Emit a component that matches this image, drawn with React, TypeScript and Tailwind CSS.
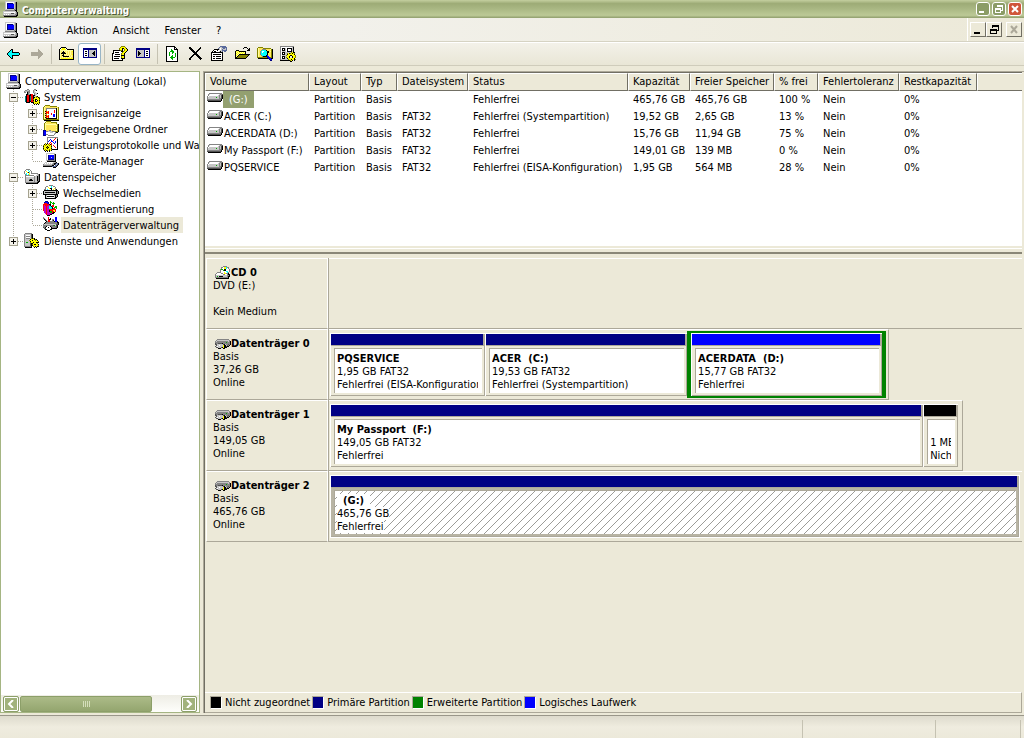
import React from "react";

const palette: Record<string, string> = {
  k: "#000000",
  w: "#ffffff",
  g: "#848484",
  l: "#c6c6c6",
  d: "#525252",
  b: "#0000ff",
  n: "#000084",
  y: "#ffff00",
  o: "#ffff9c",
  s: "#ffe75a",
  m: "#848400",
  c: "#00ffff",
  t: "#008484",
  r: "#ff0000",
  e: "#00b000",
  p: "#c000c0",
  h: "#5a6b9c",
  a: "#aca899",
};

const icons: Record<string, string[]> = {
  computer: [
    "...lllllllllll..",
    "...lwwwwwwwwlgk.",
    "...lwnnnnnnllgk.",
    "...lwnbbbbbblgk.",
    "...lwnbbbbbblgk.",
    "...lwnbbbbbblgk.",
    "...lwnbbbbbblgk.",
    "...lwnnnnnnnlgk.",
    "...lllllllllggk.",
    "...ggggggggggkk.",
    ".lllllllllllllk.",
    ".lwwwwwwwwwwwlgk",
    ".lllllllldddllgk",
    ".lwlwlwllllllggk",
    ".gggggggggggggkk",
    "..kkkkkkkkkkkkk.",
  ],
  back: [
    "................",
    "................",
    "................",
    ".....kk.........",
    "....kck.........",
    "...kcck.........",
    "..kccckkkkkkk...",
    ".kccccccccccck..",
    ".kccccccccccck..",
    "..kccckkkkkkk...",
    "...kcck.........",
    "....kck.........",
    ".....kk.........",
    "................",
    "................",
    "................",
  ],
  forward: [
    "................",
    "................",
    "................",
    ".........a......",
    ".........aa.....",
    ".........aaa....",
    "..aaaaaaaaaaa...",
    "..aaaaaaaaaaaa..",
    "..aaaaaaaaaaaa..",
    "..aaaaaaaaaaa...",
    ".........aaa....",
    ".........aa.....",
    ".........a......",
    "................",
    "................",
    "................",
  ],
  up: [
    "................",
    "..kkkkk.........",
    ".kwyyywk........",
    "kwyyyyywkkkkkkk.",
    "koooooooooooook.",
    "kosokososososyk.",
    "koskkksososossk.",
    "kokkkkkososossk.",
    "kosokososososyk.",
    "koskksososososk.",
    "kosokkkkkkososk.",
    "kosososososossk.",
    "koyyyyyyyyyyyyk.",
    "kkkkkkkkkkkkkkk.",
    "................",
    "................",
  ],
  tree: [
    "................",
    "................",
    ".nnnnnnnnnnnnnn.",
    ".nnnnnnnnnnnnnn.",
    ".nwwwwnllllllln.",
    ".nwkkwnlllllkln.",
    ".nwwwwnllllkkln.",
    ".nwkkwnlllkkkln.",
    ".nwwwwnllllkkln.",
    ".nwkkwnlllllkln.",
    ".nwwwwnllllllln.",
    ".nnnnnnnnnnnnnn.",
    "................",
    "................",
    "................",
    "................",
  ],
  pane: [
    "................",
    "................",
    ".nnnnnnnnnnnnnn.",
    ".nnnnnnnnnnnnnn.",
    ".nlllllllnwwwwn.",
    ".nlklllllnwkkwn.",
    ".nlkkllllnwwwwn.",
    ".nlkkklllnwkkwn.",
    ".nlkkllllnwwwwn.",
    ".nlklllllnwkkwn.",
    ".nlllllllnwwwwn.",
    ".nnnnnnnnnnnnnn.",
    "................",
    "................",
    "................",
    "................",
  ],
  help: [
    ".........mmmm...",
    "........myyyym..",
    ".......myykkyyk.",
    ".......myyk.myyk",
    ".kkkkkkkmmk.myyk",
    ".kwwwwwwwkkmyyk.",
    ".kwkkkkwwwmyyk..",
    "kkwwwwwwwmyyk...",
    "kwwkkkkkwmyyk...",
    "kwwwwwwwwkkkk...",
    "kwkkkkkkwmyyk...",
    "kwwwwwwwwmyyk...",
    "kwkkkkkwwkkkk...",
    "kwwwwwwwwwk.....",
    "kkkkkkkkkkk.....",
    "................",
  ],
  refresh: [
    ".kkkkkkkkk......",
    ".kwwwwwwwkk.....",
    ".kwwwwwwwkwk....",
    ".kwwwwewwkkkk...",
    ".kwwwweewwwwk...",
    ".kwwweeeewwwk...",
    ".kwwewweewwwk...",
    ".kwwewwewwewk...",
    ".kwwewwwwwewk...",
    ".kwwewwewwewk...",
    ".kwwwweewwewk...",
    ".kwwweeeeewwk...",
    ".kwwwweewwwwk...",
    ".kwwwwwewwwwk...",
    ".kwwwwwwwwwwk...",
    ".kkkkkkkkkkkk...",
  ],
  remove: [
    "................",
    ".kk.........k...",
    ".kkk.......kk...",
    "..kkk.....kk....",
    "...kkk...kk.....",
    "....kkk.kk......",
    ".....kkkk.......",
    "......kkk.......",
    ".....kkkkk......",
    "....kk..kkk.....",
    "...kk....kkk....",
    "..kk......kkk...",
    ".kk........kkk..",
    ".kk.........k...",
    "................",
    "................",
  ],
  properties: [
    ".........hhhhhh.",
    "........hllhhhhh",
    ".......hlwllhhlh",
    "...kkkkklwlhlllh",
    "..kwwwkwwllhhhhh",
    ".kwkkwwwlklh.hh.",
    "kkkkkkkkkkkk....",
    "kwwwwwwwwwwk....",
    "kwkkkkkkkkwk....",
    "kwwwwwwwwwwk....",
    "kwkkwkkkkkwk....",
    "kwwwwwwwwwwk....",
    "kwkkwkkkkkwk....",
    "kwwwwwwwwwwk....",
    "kkkkkkkkkkkk....",
    "................",
  ],
  open: [
    "................",
    "..........kkk...",
    ".........k...k.k",
    "..............kk",
    "..kkk........kkk",
    ".kyoykkkkkkk....",
    ".koyoyoyoyok....",
    ".kyoyoyoyoyk....",
    ".koyokkkkkkkkkkk",
    ".kyokmmmmmmmmmk.",
    ".kokmmmmmmmmmk..",
    ".kkmmmmmmmmmk...",
    ".kkkkkkkkkkk....",
    "................",
    "................",
    "................",
  ],
  search: [
    "................",
    ".mmmmm..........",
    "mossssmmmmmmmm..",
    "mosssggggssssomk",
    "mossgcccckssssmk",
    "mosgcwwccckksomk",
    "mosgcwcccckkssmk",
    "mosgccccccksssmk",
    "mosgccccccksssmk",
    "mossgcccckbsssmk",
    "mosssgkkkkbbssmk",
    "mmmmmmmmmmnbbmmk",
    ".kkkkkkkkkknbbkk",
    "............nbb.",
    ".............nn.",
    "................",
  ],
  settings: [
    "gggggggggggggg..",
    "gwwwwwwwwwwwlk..",
    "gwkkklwkkkkklk..",
    "gwkwklwkwwwklk..",
    "gwkkklwkwwwklk..",
    "gwllllwkkkkklk..",
    "gwkkkllllllmykk.",
    "gwkwkllmykmykym.",
    "gwkkkllkyyyyyyk.",
    "gwllllmyyykkyyym",
    "gwkkkllyyk..kyym",
    "gwkwklmyyk..kyym",
    "gwkkkllkyyyyyyk.",
    "glllllllmyykyykm",
    "kkkkkkkkkkmyk.k.",
    "..........kk....",
  ],
  tools: [
    "...gg.....gg....",
    ".ggllg...gllk...",
    "gllggg...gl.....",
    "gg.kgg...gll....",
    "...kgl....gllk..",
    "..kkggkrr.gll...",
    "..krrkkrrkkl....",
    ".tkrrktrrkllmk..",
    ".tkrrktrrkkymykm",
    ".tkrrktrrkyyyyyk",
    ".tkrrktrrmykkyym",
    ".tkrrktrrkyk.kyk",
    ".tkrrkkrrmykkyym",
    "..kkkk.kkkyyyyyk",
    ".........kymykym",
    "..........k.k.k.",
  ],
  events: [
    "..mmmmm.........",
    ".mossssmmmmmmm..",
    "mosssssssssssssm",
    "mosggggggggggkom",
    "mosgwwwwwwwwwkom",
    "mosgwwwwwwwrwkom",
    "mokryrwwwwwrwkom",
    "mosrrrwwwwwrwkom",
    "mokryrwwrwwwwkom",
    "mosgwwwwrwbbwkom",
    "mokryrwwwwbbwkom",
    "mosrrrwwwwbbwkom",
    "mokryrwwwwwwwkom",
    "moskkkkkkkkkkkom",
    "mmmmmmmmmmmmmmmm",
    ".kkkkkkkkkkkkkkk",
  ],
  shared: [
    "...mmmmm........",
    "..mossssmmmmmm..",
    ".mossssssssssm..",
    ".mooooooooooosmk",
    ".mossssssssssomk",
    ".mosssssssssssmk",
    ".mossssssssssomk",
    ".mosssssssssssmk",
    ".mossssssssssomk",
    "nnnsssggsssssomk",
    "nbbggllllgggmmmk",
    "nbbwwwwlllwwgkk.",
    "nbbwwwwwwwwlg...",
    "nbbggwwwwwwg....",
    "nnn..gggggg.....",
    "................",
  ],
  perf: [
    "....ggggggggggg.",
    "....gwwwwwwwrwg.",
    "....gwwbwwwrwwk.",
    "....gwbwbwrwwwk.",
    "....gbwwbbwwbwk.",
    "....gwwrwwbwbwk.",
    "..m.kwrwrwwbwwk.",
    ".kykymykrwwwwwk.",
    "mymyyymymwrwwwk.",
    "kyyykyyykwwrwwk.",
    "myykmkyymwwwrwk.",
    "kyyykyyykwwwwwk.",
    "mymyyymymkkkkkk.",
    ".kykmykyk.......",
    "..k.k.k.........",
    "................",
  ],
  device: [
    "...lllllllll....",
    "...lwwwwwwwgk...",
    "...lwnbbbbbgk...",
    "...lwnbbbbbgk...",
    "...lwnbblbbgk...",
    "...lwnbbbbbgk...",
    "...lwnnnnnngk...",
    "...lggggggggk...",
    "....kkkkkkkkk...",
    "..llwwwwwwllgk..",
    ".lwlwlwlwlgkkhhk",
    "gllllllllggkhlhk",
    "gggggggggkk.hhk.",
    "kkkkkkkkkhhhhk..",
    "..........kkk...",
    "................",
  ],
  storage: [
    "..gggg..........",
    ".gwwcwg.........",
    "gwywwcwg........",
    "gwwyklwg........",
    "gwcwwywggggggg..",
    ".gcwcywwwwwwwlgk",
    ".gggggggggwwllgk",
    ".gwwwwwwwwgllkgk",
    ".gllllllllgllkgk",
    ".gllllllllgllkgk",
    ".glllgkkllgllkgk",
    ".glllkkkklgllkgk",
    ".gllllllllgllgkk",
    ".ggggggggggggkk.",
    "..kkkkkkkkkkkk..",
    "................",
  ],
  removable: [
    "......gggg......",
    "...ggwwwcwgg....",
    "..gwwywwcwwwg...",
    "..gwwwykkwwyg...",
    ".ggwcwwwkwywgk..",
    ".kkkkkkkkkkkkkk.",
    "kllllllllllllkgk",
    "klkkkkkkkkkklkgk",
    "kllllllllllllkgk",
    "kkkkkkkkkkkkkkk.",
    "..klwwwwwwwlkgk.",
    "..klkkkkkkklkgk.",
    "..klwwwwwwwlkk..",
    "..kkkkkkkkkkk...",
    "................",
    "................",
  ],
  defrag: [
    "..nnn..e........",
    ".nbbbn.ee.e.....",
    ".rrrbn.e.eee....",
    "rrrrrrkk..e.....",
    "rprrrppk.rr.....",
    "rpprppcckrr.ee..",
    "rpprppccck.eee..",
    "rpprppccckrr.e..",
    "rpprpprrrrrrr...",
    "rpprppkrrryyr...",
    ".pprppkeerryr...",
    ".pprpppeerkk....",
    "..prpppppkk.....",
    "...rpppkk.......",
    "....kkk.........",
    "................",
  ],
  disks: [
    "g....r......bb..",
    "gg...r.k....bb..",
    ".kg..rkk.gg.bb..",
    "..kg.rr..gk.bb..",
    "...kgrrggggkbbk.",
    "..kgggggggggggkk",
    ".kggggggggggggdk",
    "gllllllllllllddk",
    "ggggggggggdeldk.",
    "gggkwwwkgggggdk.",
    "dgkwwkwwkggggdk.",
    ".ddwwwwwkkkkkk..",
    "..kkwwwkk.......",
    "....kkk.........",
    "................",
    "................",
  ],
  services: [
    ".ggggggg........",
    "glllllldk.......",
    "glwwwwldk.......",
    "glggggldk.......",
    "glwwwwldk.......",
    "glgggglmkmk.....",
    "glllllkyyykmk...",
    "gllllmyykyymyk..",
    "glllllkyyyyyyym.",
    "gleellmyykyykkk.",
    "gllllldkkyyyym..",
    "gllllldkmykkyyk.",
    "gllllldkkyyyyym.",
    "gggggggk.mykykk.",
    ".kkkkkkk..k.k...",
    "................",
  ],
  volume: [
    "................",
    "................",
    "..ggggggggggggg.",
    ".glwwwwwwwwwlggd",
    ".gwwwwwwwwwlgldk",
    "gwllllllllllgldk",
    "gllllllllellgldk",
    "glllllllllllggdk",
    "ggggggggggggggk.",
    "ddddddddddddddk.",
    ".kkkkkkkkkkkkk..",
  ],
  disk: [
    "..gggggggggggg..",
    ".gllllllllllllg.",
    "glggggggggggglgk",
    "gggggggggggegggk",
    "dggddddkgggggggk",
    "ddlllllldklggdgk",
    ".dllwlllykkldgk.",
    "dlwlllllykkdkk..",
    ".ddllldkykkk....",
    "...kkk..kk......",
  ],
  cd: [
    "........gggg....",
    "......ggwyycgg..",
    "......gwwyycwg..",
    ".....geewkkwwwg.",
    ".....gwwekkwwwg.",
    ".....gwwwwwccwg.",
    "..ggggwwwywwcg..",
    ".gwwwwggwyyggk..",
    "gwwwwwwwggwwgkk.",
    "glllllllllllggk.",
    "glelkkkkllllgkk.",
    "gggggggggggggk..",
    ".kkkkkkkkkkkkk..",
  ],
};

function Icon({ name, className = "" }: { name: string; className?: string }) {
  const rows = icons[name];
  const cells: React.ReactNode[] = [];
  rows.forEach((row, y) => {
    let x = 0;
    while (x < row.length) {
      let end = x + 1;
      while (row[end] === row[x]) end++;
      if (row[x] !== ".") {
        cells.push(<rect key={`${x}-${y}`} x={x} y={y} width={end - x} height={1} fill={palette[row[x]]} />);
      }
      x = end;
    }
  });
  return (
    <svg className={`shrink-0 ${className}`} width={16} height={rows.length} viewBox={`0 0 16 ${rows.length}`} shapeRendering="crispEdges" aria-hidden="true">
      {cells}
    </svg>
  );
}

// One 19px wide step of the dotted tree lines
function Guide({ up, down, right }: { up?: boolean; down?: boolean; right?: boolean }) {
  return (
    <svg className="shrink-0" width="19" height="16" viewBox="0 0 19 16" shapeRendering="crispEdges" aria-hidden="true">
      <g stroke="#aca899" strokeDasharray="1 1">
        {up && <path d="M8.5 0V8" />}
        {down && <path d="M8.5 8V16" />}
        {right && <path d="M9 8.5H19" />}
      </g>
    </svg>
  );
}

function Expander({ open, label, down = true }: { open?: boolean; label: string; down?: boolean }) {
  return (
    <button type="button" aria-label={label} aria-expanded={!!open} className="block shrink-0">
      <svg width="19" height="16" viewBox="0 0 19 16" shapeRendering="crispEdges">
        <g stroke="#aca899" strokeDasharray="1 1">
          <path d="M8.5 0V4" />
          {down && <path d="M8.5 12V16" />}
          <path d="M13 8.5H19" />
        </g>
        <rect x="4.5" y="4.5" width="8" height="8" fill="#f4f2ea" stroke="#a5a28f" />
        <path d="M6 8.5H11" stroke="#000" />
        {!open && <path d="M8.5 6V11" stroke="#000" />}
      </svg>
    </button>
  );
}

type Node = { text: string; icon: string; level: number; box?: "open" | "closed"; last?: boolean; selected?: boolean };

const nodes: Node[] = [
  { text: "System", icon: "tools", level: 1, box: "open" },
  { text: "Ereignisanzeige", icon: "events", level: 2, box: "closed" },
  { text: "Freigegebene Ordner", icon: "shared", level: 2, box: "closed" },
  { text: "Leistungsprotokolle und Warnungen", icon: "perf", level: 2, box: "closed" },
  { text: "Geräte-Manager", icon: "device", level: 2, last: true },
  { text: "Datenspeicher", icon: "storage", level: 1, box: "open" },
  { text: "Wechselmedien", icon: "removable", level: 2, box: "closed" },
  { text: "Defragmentierung", icon: "defrag", level: 2 },
  { text: "Datenträgerverwaltung", icon: "disks", level: 2, last: true, selected: true },
  { text: "Dienste und Anwendungen", icon: "services", level: 1, box: "closed", last: true },
];

function Tree() {
  return (
    <ul className="flex-1 overflow-hidden pt-px pl-1 whitespace-nowrap">
      <li className="flex h-4 items-center">
        <Icon name="computer" />
        <span className="pl-1">Computerverwaltung (Lokal)</span>
      </li>
      {nodes.map((n) => (
        <li key={n.text} className="flex h-4 items-center">
          {n.level === 2 && <Guide up down />}
          {n.box ? <Expander open={n.box === "open"} label={n.text} down={!n.last} /> : <Guide up down={!n.last} right />}
          <Icon name={n.icon} />
          <span className={n.selected ? "ml-0.5 h-4 bg-[#ece9d8] pt-0.5 pr-1 pl-0.5" : "h-4 min-w-0 overflow-hidden pt-0.5 pl-1"}>{n.text}</span>
        </li>
      ))}
    </ul>
  );
}

const scrollButton = "flex h-4 w-4 items-center justify-center rounded-xs border border-[#8c9f69] bg-[#a1b27c] outline outline-white -outline-offset-2";

function ScrollBar() {
  return (
    <div className="flex h-[17px] items-center gap-px bg-gradient-to-b from-[#eeede5] to-[#fefefb] px-0.5">
      <button type="button" aria-label="Nach links" className={scrollButton}>
        <svg width="8" height="8" viewBox="0 0 8 8"><path d="M6 0L2 4L6 8" fill="none" stroke="#fff" strokeWidth="2" /></svg>
      </button>
      <div className="flex h-4 w-[132px] items-center justify-center gap-px rounded-xs border border-[#8c9f69] bg-gradient-to-b from-[#acbb88] to-[#94a66f]">
        {[0, 1, 2, 3].map((i) => (
          <span key={i} className="h-1.5 w-px border-r border-[#d5debb]" />
        ))}
      </div>
      <button type="button" aria-label="Nach rechts" className={`ml-auto ${scrollButton}`}>
        <svg width="8" height="8" viewBox="0 0 8 8"><path d="M2 0L6 4L2 8" fill="none" stroke="#fff" strokeWidth="2" /></svg>
      </button>
    </div>
  );
}

const columns = ["Volume", "Layout", "Typ", "Dateisystem", "Status", "Kapazität", "Freier Speicher", "% frei", "Fehlertoleranz", "Restkapazität"];

const volumes = [
  ["(G:)", "Partition", "Basis", "", "Fehlerfrei", "465,76 GB", "465,76 GB", "100 %", "Nein", "0%"],
  ["ACER (C:)", "Partition", "Basis", "FAT32", "Fehlerfrei (Systempartition)", "19,52 GB", "2,65 GB", "13 %", "Nein", "0%"],
  ["ACERDATA (D:)", "Partition", "Basis", "FAT32", "Fehlerfrei", "15,76 GB", "11,94 GB", "75 %", "Nein", "0%"],
  ["My Passport (F:)", "Partition", "Basis", "FAT32", "Fehlerfrei", "149,01 GB", "139 MB", "0 %", "Nein", "0%"],
  ["PQSERVICE", "Partition", "Basis", "FAT32", "Fehlerfrei (EISA-Konfiguration)", "1,95 GB", "564 MB", "28 %", "Nein", "0%"],
];

function VolumeTable() {
  return (
    <div className="h-[173px] overflow-hidden bg-white">
      <table className="w-full table-fixed border-separate border-spacing-0 whitespace-nowrap">
        <colgroup>
          <col className="w-[104px]" />
          <col className="w-[52px]" />
          <col className="w-[36px]" />
          <col className="w-[71px]" />
          <col className="w-[160px]" />
          <col className="w-[62px]" />
          <col className="w-[84px]" />
          <col className="w-[44px]" />
          <col className="w-[81px]" />
          <col className="w-[78px]" />
          <col />
        </colgroup>
        <thead>
          <tr>
            {columns.map((c) => (
              <th key={c} className="h-[18px] border-t border-r border-b border-l border-t-white border-r-[#716f64] border-b-[#716f64] border-l-white bg-[#ece9d8] px-1 pt-0 pb-px text-left leading-[15px] font-normal">
                {c}
              </th>
            ))}
            <td className="border-t border-b border-l border-t-white border-b-[#716f64] border-l-white bg-[#ece9d8]" />
          </tr>
        </thead>
        <tbody>
          {volumes.map((row, r) => (
            <tr key={row[0]}>
              {row.map((cell, i) =>
                i === 0 ? (
                  <td key={i} className="h-[17px] p-0">
                    <div className="flex items-start pl-0.5">
                      <Icon name="volume" />
                      <span className={r === 0 ? "bg-[#93a070] px-1.5 leading-[17px] text-white" : "pl-px leading-[17px]"}>{cell}</span>
                    </div>
                  </td>
                ) : (
                  <td key={i} className="h-[17px] p-0 pl-[5px] leading-[17px]">{cell}</td>
                )
              )}
              <td />
            </tr>
          ))}
        </tbody>
      </table>
    </div>
  );
}

function Hatching() {
  return (
    <svg className="absolute inset-0 h-full w-full" shapeRendering="crispEdges" aria-hidden="true">
      <defs>
        <pattern id="hatch" width="8" height="8" patternUnits="userSpaceOnUse">
          <rect width="8" height="8" fill="#fff" />
          <path d="M7 0h1v1h-1zM6 1h1v1h-1zM5 2h1v1h-1zM4 3h1v1h-1zM3 4h1v1h-1zM2 5h1v1h-1zM1 6h1v1h-1zM0 7h1v1h-1z" fill="#9c9c98" />
        </pattern>
      </defs>
      <rect width="100%" height="100%" fill="url(#hatch)" />
    </svg>
  );
}

type PartProps = { title: string; size: string; status: string; bar: string; hatched?: boolean };

function Partition({ title, size, status, bar, hatched }: PartProps) {
  const back = hatched ? "bg-white" : "";
  return (
    <div className="flex min-w-0 flex-1 flex-col border-t border-l border-white">
      <div className={`h-3 border-r-2 border-b border-r-[#aca899] border-b-[#aca899] ${bar}`} />
      <div className={`flex min-h-0 flex-1 border-r border-b border-[#aca899] p-0.5 pl-[3px] ${hatched ? "bg-[#b8b4a4]" : ""}`}>
        <div className="relative min-w-0 flex-1 overflow-hidden border-t border-l border-[#aca899] bg-white px-0.5 pt-[3px] whitespace-pre">
          {hatched && <Hatching />}
          <div className="relative mr-0.5 overflow-hidden leading-[13px]">
            <div className="h-[13px] font-bold"><span className={hatched ? "bg-white px-1.5" : ""}>{title}</span></div>
            <div><span className={back}>{size}</span></div>
            <div><span className={back}>{status}</span></div>
          </div>
        </div>
      </div>
    </div>
  );
}

function DiskRow({ icon = "disk", name, lines, children }: { icon?: string; name: string; lines: string[]; children?: React.ReactNode }) {
  return (
    <section className="flex h-[71px]">
      <div className="w-[122px] shrink-0 border-t border-r border-b border-l border-t-white border-r-white border-b-[#aca899] border-l-white pt-[7px] pl-1.5 leading-[13px]">
        <h2 className="flex h-[13px] items-center font-bold whitespace-nowrap">
          <Icon name={icon} className="ml-0.5" />
          {name}
        </h2>
        {lines.map((l, i) => (
          <p key={i} className="h-[13px]">{l}</p>
        ))}
      </div>
      <div className="flex min-w-0 flex-1 border-l border-[#aca899]">{children}</div>
    </section>
  );
}

const track = "flex min-w-0 border-t border-r border-b border-t-white border-r-[#aca899] border-b-[#aca899]";

function Disks() {
  return (
    <div className="flex-1 pl-px">
      <DiskRow icon="cd" name="CD 0" lines={["DVD (E:)", "", "Kein Medium"]}>
        <div className="flex-1 border-t border-b border-t-white border-b-[#aca899]" />
      </DiskRow>
      <DiskRow name="Datenträger 0" lines={["Basis", "37,26 GB", "Online"]}>
        <div className={`${track} flex-[557] py-px pr-0.5 pl-px`}>
          <div className="flex min-w-0 flex-[155] py-0.5"><Partition title="PQSERVICE" size="1,95 GB FAT32" status="Fehlerfrei (EISA-Konfiguration)" bar="bg-[#000084]" /></div>
          <div className="flex min-w-0 flex-[202] py-0.5"><Partition title="ACER  (C:)" size="19,53 GB FAT32" status="Fehlerfrei (Systempartition)" bar="bg-[#000084]" /></div>
          <div className="flex min-w-0 flex-[191] border-x-4 border-y-2 border-[#008200] bg-[#ece9d8]"><Partition title="ACERDATA  (D:)" size="15,77 GB FAT32" status="Fehlerfrei" bar="bg-[#0000ff]" /></div>
        </div>
        <div className="flex-[133]" />
      </DiskRow>
      <DiskRow name="Datenträger 1" lines={["Basis", "149,05 GB", "Online"]}>
        <div className={`${track} flex-[629] py-[3px] pr-1 pl-px`}>
          <div className="flex min-w-0 flex-[594]"><Partition title="My Passport  (F:)" size="149,05 GB FAT32" status="Fehlerfrei" bar="bg-[#000084]" /></div>
          <div className="flex min-w-0 flex-[35]"><Partition title=" " size="1 MB" status="Nicht zugeordnet" bar="bg-black" /></div>
        </div>
        <div className="flex-[59]" />
      </DiskRow>
      <DiskRow name="Datenträger 2" lines={["Basis", "465,76 GB", "Online"]}>
        <div className="flex min-w-0 flex-1 border-t border-b border-t-white border-b-[#aca899] py-[3px] pr-0.5 pl-px">
          <div className="flex min-w-0 flex-1 border-r border-b border-white"><Partition title="(G:)" size="465,76 GB" status="Fehlerfrei" bar="bg-[#000084]" hatched /></div>
        </div>
      </DiskRow>
    </div>
  );
}

function Legend() {
  const items = [
    ["Nicht zugeordnet", "bg-black"],
    ["Primäre Partition", "bg-[#000084]"],
    ["Erweiterte Partition", "bg-[#008200]"],
    ["Logisches Laufwerk", "bg-[#0000ff]"],
  ];
  return (
    <div className="flex h-[21px] items-center gap-0.5 border-t border-r border-b border-t-white border-r-[#aca899] border-b-[#aca899] pl-[5px] whitespace-nowrap">
      {items.map(([text, color]) => (
        <div key={text} className="flex items-center gap-[3px]">
          <span className={`h-[13px] w-3 border-t border-r border-b border-l border-t-[#aca899] border-r-white border-b-white border-l-[#aca899] ${color}`} />
          {text}
        </div>
      ))}
    </div>
  );
}

const tool = "flex h-[22px] w-[23px] items-center justify-center";

function ToolButton({ icon, label, active }: { icon: string; label: string; active?: boolean }) {
  return (
    <button type="button" aria-label={label} title={label} className={active ? `${tool} rounded-[3px] border border-[#98b5c6] bg-white` : tool}>
      <Icon name={icon} />
    </button>
  );
}

function Separator() {
  return <span className="mr-[3px] ml-[3px] h-5 w-px bg-[#c5c2b2]" />;
}

const caption = "flex h-3.5 w-3.5 items-center justify-center rounded-[3px] border border-white";
const child = "flex h-[15px] w-4 items-center justify-center border-t border-r border-b border-l border-t-white border-r-[#716f64] border-b-[#716f64] border-l-white bg-[#ece9d8]";

export default function App() {
  return (
    <div className="flex min-h-screen flex-col bg-[#ece9d8] font-['Tahoma','DejaVu_Sans_Condensed','DejaVu_Sans',sans-serif] text-[11px] leading-[13px] text-black">
      <header className="flex h-[18px] items-center bg-[linear-gradient(#c4cf9f_0%,#9dab76_20%,#aab884_50%,#bcc996_85%,#8f9d6c_100%)] px-0.5">
        <Icon name="computer" />
        <h1 className="pt-0.5 pl-1 text-[10px] font-bold text-white [text-shadow:1px_1px_0_#4b5734]">Computerverwaltung</h1>
        <div className="ml-auto flex gap-0.5">
          <button type="button" aria-label="Minimieren" className={`${caption} bg-[#8b9c66]`}>
            <svg width="10" height="10" shapeRendering="crispEdges"><rect x="1" y="7" width="5" height="2" fill="#fff" /></svg>
          </button>
          <button type="button" aria-label="Verkleinern" className={`${caption} bg-[#8b9c66]`}>
            <svg width="10" height="10" fill="none" stroke="#fff" shapeRendering="crispEdges"><path d="M3.5 3V1.5H8.5V6.5H7M3 2H9M1.5 4.5H6.5V8.5H1.5ZM1 5H7" /></svg>
          </button>
          <button type="button" aria-label="Schließen" className={`${caption} bg-[#d0553a]`}>
            <svg width="10" height="10"><path d="M2 2L8 8M8 2L2 8" stroke="#fff" strokeWidth="2" /></svg>
          </button>
        </div>
      </header>

      <div className="flex h-6 items-center border-b border-[#d6d3c3] bg-gradient-to-r from-[#f5f5f5] to-[#ece9d8] pl-0.5">
        <Icon name="computer" />
        <nav className="flex gap-[15px] pt-px pl-[7px]">
          {["Datei", "Aktion", "Ansicht", "Fenster", "?"].map((m) => (
            <button key={m} type="button">{m}</button>
          ))}
        </nav>
        <div className="ml-auto flex h-full items-center border-l border-white pr-0.5 pl-0.5">
          <button type="button" aria-label="Fenster minimieren" className={child}>
            <svg width="12" height="11" shapeRendering="crispEdges"><rect x="2" y="8" width="6" height="2" /></svg>
          </button>
          <button type="button" aria-label="Fenster verkleinern" className={child}>
            <svg width="12" height="11" fill="none" stroke="#000" shapeRendering="crispEdges"><path d="M4.5 4V1.5H10.5V6.5H8M4 2H11M2.5 5.5H8.5V9.5H2.5ZM2 6H9" /></svg>
          </button>
          <button type="button" aria-label="Fenster schließen" className={`ml-1 ${child}`}>
            <svg width="12" height="11"><path d="M3 2L9 9M9 2L3 9" stroke="#aca899" strokeWidth="2" /></svg>
          </button>
        </div>
      </div>

      <div className="flex h-6 items-center border-t border-b border-t-white border-b-[#cfccbb] bg-gradient-to-b from-[#f3f1e9] to-[#e9e6d6] pl-0.5" role="toolbar">
        <ToolButton icon="back" label="Zurück" />
        <ToolButton icon="forward" label="Vorwärts" />
        <Separator />
        <ToolButton icon="up" label="Aufwärts" />
        <ToolButton icon="tree" label="Struktur" active />
        <Separator />
        <ToolButton icon="help" label="Hilfe" />
        <ToolButton icon="pane" label="Aktionsbereich" />
        <Separator />
        <ToolButton icon="refresh" label="Aktualisieren" />
        <ToolButton icon="remove" label="Löschen" />
        <ToolButton icon="properties" label="Eigenschaften" />
        <ToolButton icon="open" label="Öffnen" />
        <ToolButton icon="search" label="Suchen" />
        <ToolButton icon="settings" label="Einstellungen" />
      </div>

      <main className="flex flex-1 gap-[3px] pt-[5px]">
        <aside className="flex w-[200px] shrink-0 flex-col border border-[#a5b583] bg-white">
          <Tree />
          <ScrollBar />
        </aside>
        <div className="flex min-w-0 flex-1 flex-col border-t border-l border-[#aca899] pr-0.5">
          <div className="flex flex-1 flex-col border-t border-l border-[#716f64]">
            <VolumeTable />
            <div className="mt-0.5 h-1.5 border-t border-b-2 border-t-white border-b-[#8a8778]" />
            <div className="flex flex-1 flex-col pt-1">
              <Disks />
              <Legend />
            </div>
          </div>
        </div>
      </main>

      <footer className="mt-0.5 flex h-[23px] border-t border-[#9a978a] bg-gradient-to-b from-[#dedbcd] via-[#efecdf] to-[#ece9da] pt-1">
        <span className="flex-1" />
        <span className="w-[133px] border-l border-[#c5c2b2]" />
        <span className="w-[85px] border-l border-[#c5c2b2]" />
        <span className="w-1 border-l border-[#c5c2b2]" />
      </footer>
    </div>
  );
}
